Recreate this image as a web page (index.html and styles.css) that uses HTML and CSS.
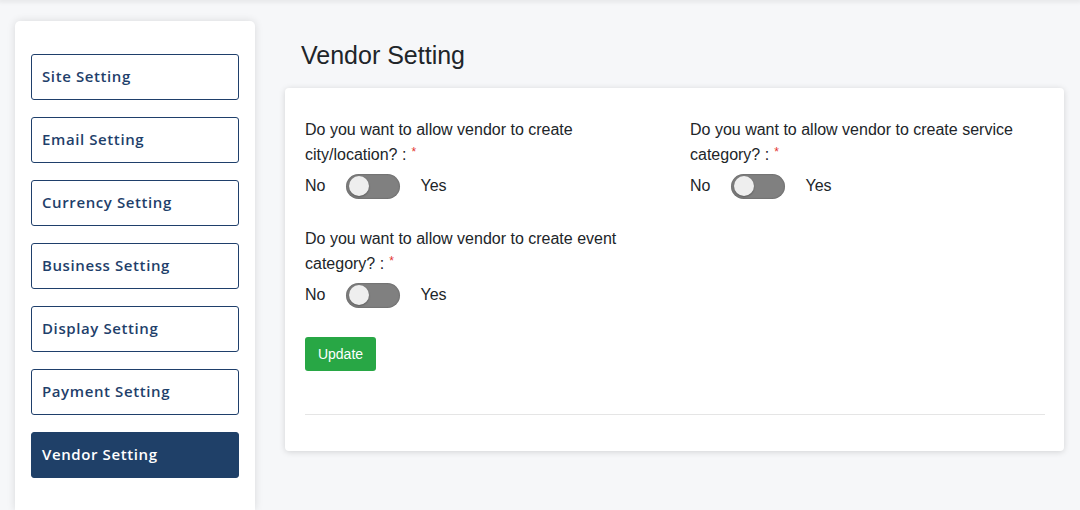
FILE: index.html
```html
<!DOCTYPE html>
<html>
<head>
<meta charset="utf-8">
<link rel="stylesheet" href="styles.css">
</head>
<body>
<div class="topshade"></div>
<div class="layout">
  <aside class="sidebar">
    <a class="nav-btn">Site Setting</a>
    <a class="nav-btn">Email Setting</a>
    <a class="nav-btn">Currency Setting</a>
    <a class="nav-btn">Business Setting</a>
    <a class="nav-btn">Display Setting</a>
    <a class="nav-btn">Payment Setting</a>
    <a class="nav-btn active">Vendor Setting</a>
  </aside>
  <main class="main">
    <h1 class="title">Vendor Setting</h1>
    <section class="card">
      <div class="fields">
        <div class="field">
          <div class="label">Do you want to allow vendor to create city/location? :<span class="req">*</span></div>
          <div class="switch-row"><span>No</span><span class="switch"><span class="knob"></span></span><span>Yes</span></div>
        </div>
        <div class="field">
          <div class="label">Do you want to allow vendor to create service category? :<span class="req">*</span></div>
          <div class="switch-row"><span>No</span><span class="switch"><span class="knob"></span></span><span>Yes</span></div>
        </div>
        <div class="field">
          <div class="label">Do you want to allow vendor to create event category? :<span class="req">*</span></div>
          <div class="switch-row"><span>No</span><span class="switch"><span class="knob"></span></span><span>Yes</span></div>
        </div>
      </div>
      <button class="update">Update</button>
      <hr class="divider">
    </section>
  </main>
</div>
</body>
</html>
```
FILE: styles.css
```css
html, body { margin: 0; padding: 0; }
body {
  background: #f6f7f9;
  font-family: "Liberation Sans", Arial, sans-serif;
  color: #212529;
  height: 510px;
  overflow: hidden;
}
.topshade {
  height: 0;
  box-shadow: 0 0 4px 2px rgba(0,0,0,0.08);
}
.layout {
  display: flex;
  gap: 30px;
  padding: 21px 16px 0 15px;
}
.sidebar {
  width: 240px;
  box-sizing: border-box;
  background: #fff;
  border-radius: 5px 5px 0 0;
  box-shadow: 0 0 8px rgba(0,0,0,0.12);
  padding: 33px 16px 0;
  display: flex;
  flex-direction: column;
  gap: 17px;
  height: 489px;
}
.nav-btn {
  display: flex;
  align-items: center;
  height: 46px;
  box-sizing: border-box;
  border: 1px solid #1f3f6b;
  border-radius: 3px;
  padding: 0 10px 3px;
  font-family: "Open Sans", sans-serif;
  font-weight: 600;
  font-size: 15px;
  color: #1f3f6b;
  letter-spacing: 0.6px;
}
.nav-btn.active {
  background: #1f4068;
  color: #fff;
  border-color: #1f4068;
}
.main { flex: 1; }
.title {
  font-weight: 400;
  font-size: 25px;
  line-height: 30px;
  margin: 19px 0 18px 16px;
  color: #212529;
}
.card {
  background: #fff;
  border-radius: 4px;
  box-shadow: 0 1px 6px rgba(0,0,0,0.15);
  padding: 29px 19px 36px 20px;
}
.fields {
  display: grid;
  grid-template-columns: 355px 355px;
  column-gap: 30px;
  row-gap: 27px;
}
.label {
  font-size: 16px;
  line-height: 25px;
}
.req {
  display: inline-block;
  margin-left: 5px;
  color: #e3342f;
  font-size: 12px;
  line-height: 12px;
  vertical-align: 4px;
}
.switch-row {
  display: flex;
  align-items: center;
  margin-top: 6px;
  font-size: 16px;
  height: 26px;
}
.switch {
  width: 54px;
  height: 25px;
  border-radius: 13px;
  background: #808080;
  box-shadow: inset 0 0 2px rgba(0,0,0,0.35);
  margin: 0 20px 0 21px;
  display: flex;
  align-items: center;
  padding-left: 3px;
  box-sizing: border-box;
}
.knob {
  width: 20px;
  height: 20px;
  border-radius: 50%;
  background: #eeeeee;
  box-shadow: 0 1px 2px rgba(0,0,0,0.3);
}
.update {
  display: block;
  margin-top: 29px;
  height: 34px;
  width: 71px;
  border: none;
  border-radius: 3px;
  background: #28a745;
  color: #fff;
  font-family: "Liberation Sans", Arial, sans-serif;
  font-size: 14px;
  padding: 0;
}
.divider {
  border: 0;
  border-top: 1px solid #e5e5e5;
  margin: 43px 0 0;
}
```
